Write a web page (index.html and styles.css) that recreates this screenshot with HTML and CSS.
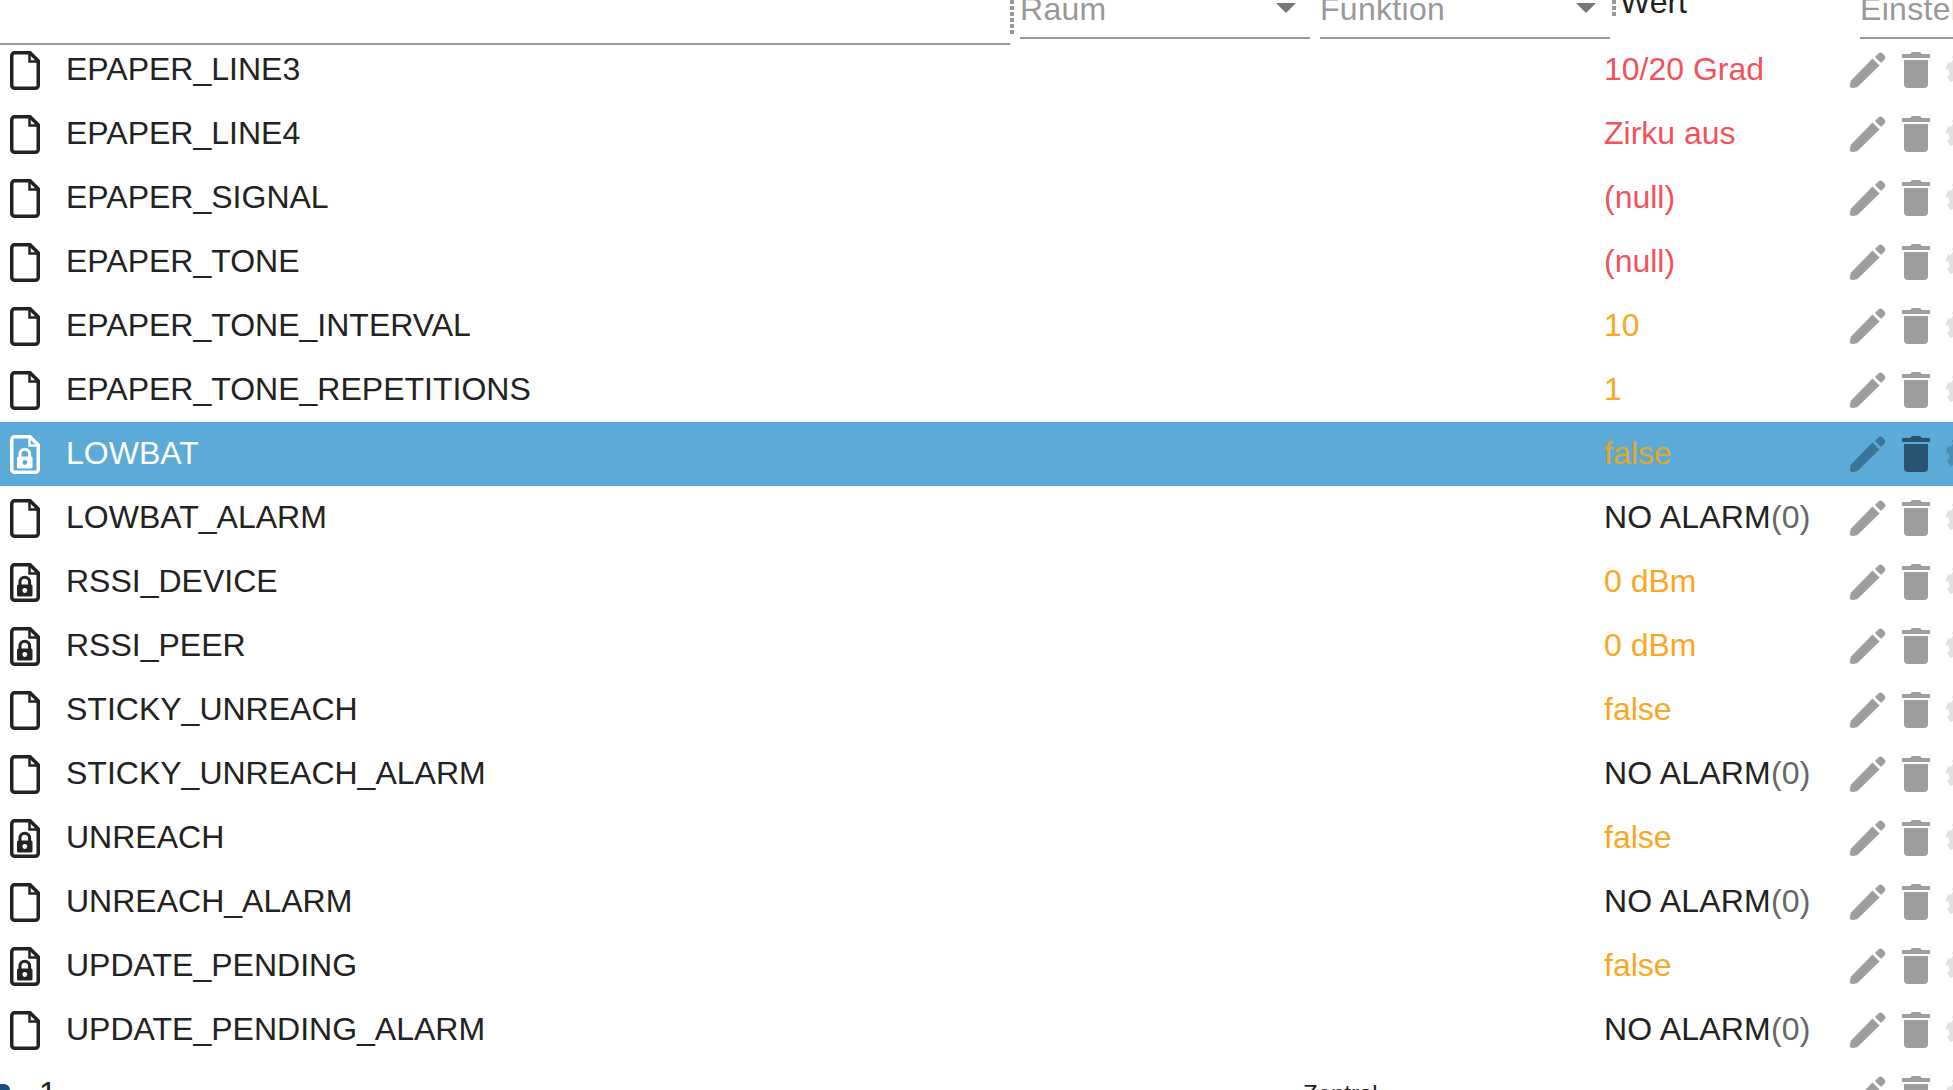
FILE: index.html
```html
<!DOCTYPE html>
<html lang="en">
<head>
    <meta charset="UTF-8">
    <title>Objekte</title>
    <link rel="stylesheet" href="styles.css">
</head>
<body>
    <svg class="defs" width="0" height="0">
        <symbol id="i-file" viewBox="0 0 30 39">
            <path class="file-line" d="M5 1.75H20L28.25 10V34a3 3 0 0 1-3 3.25H4.75a3 3 0 0 1-3-3.25V4.75a3 3 0 0 1 3.25-3z"/>
            <path class="file-fold" d="M19.5 2V10.5H28"/>
        </symbol>
        <symbol id="i-file-lock" viewBox="0 0 30 39">
            <path class="file-line" d="M5 1.75H20L28.25 10V34a3 3 0 0 1-3 3.25H4.75a3 3 0 0 1-3-3.25V4.75a3 3 0 0 1 3.25-3z"/>
            <path class="file-fold" d="M19.5 2V10.5H28"/>
            <path class="lock-bow" d="M10 23V19a4.8 4.8 0 0 1 9.6 0V23"/>
            <rect class="lock-body" x="7" y="21.5" width="15.5" height="12" rx="1.5"/>
            <circle class="lock-hole" cx="14.8" cy="27.5" r="2.4"/>
        </symbol>
        <symbol id="i-pencil" viewBox="0 0 36 36">
            <path d="M1 28.5L22.5 6.5 29.5 13.5 7.5 35Q4.5 36 2 36 0 36 0 34 0 31 1 28.5z"/>
            <path d="M25 5L28.5 1.5Q30.5 0 32 1L35 4Q36 5.5 34.5 7.5L31 11z"/>
        </symbol>
        <symbol id="i-trash" viewBox="0 0 28 36">
            <path d="M10 0h8l2 2h8v4H0V2h8z"/>
            <path d="M2 8h24v24a4 4 0 0 1-4 4H6a4 4 0 0 1-4-4z"/>
        </symbol>
        <symbol id="i-gear" viewBox="0 0 36 36">
            <circle cx="18" cy="18" r="15"/>
            <circle class="gear-teeth" cx="18" cy="18" r="16"/>
        </symbol>
    </svg>

    <div class="table">
        <div class="head">
            <div class="head-name"></div>
            <div class="handle"></div>
            <div class="head-cell">
                <span class="head-label">Raum</span>
                <span class="caret"></span>
            </div>
            <div class="head-cell">
                <span class="head-label">Funktion</span>
                <span class="caret"></span>
            </div>
            <div class="handle handle-short"></div>
            <div class="head-value">Wert</div>
            <div class="head-cell head-settings">
                <span class="head-label">Einstellungen</span>
            </div>
        </div>

        <div class="rows">
            <div class="row">
                <div class="row-icon"><svg class="file"><use href="#i-file"/></svg></div>
                <div class="row-name">EPAPER_LINE3</div>
                <div class="row-room"></div>
                <div class="row-value red">10/20 Grad</div>
                <div class="actions"><svg class="pencil"><use href="#i-pencil"/></svg><svg class="trash"><use href="#i-trash"/></svg><svg class="gear"><use href="#i-gear"/></svg></div>
            </div>
            <div class="row">
                <div class="row-icon"><svg class="file"><use href="#i-file"/></svg></div>
                <div class="row-name">EPAPER_LINE4</div>
                <div class="row-room"></div>
                <div class="row-value red">Zirku aus</div>
                <div class="actions"><svg class="pencil"><use href="#i-pencil"/></svg><svg class="trash"><use href="#i-trash"/></svg><svg class="gear"><use href="#i-gear"/></svg></div>
            </div>
            <div class="row">
                <div class="row-icon"><svg class="file"><use href="#i-file"/></svg></div>
                <div class="row-name">EPAPER_SIGNAL</div>
                <div class="row-room"></div>
                <div class="row-value red">(null)</div>
                <div class="actions"><svg class="pencil"><use href="#i-pencil"/></svg><svg class="trash"><use href="#i-trash"/></svg><svg class="gear"><use href="#i-gear"/></svg></div>
            </div>
            <div class="row">
                <div class="row-icon"><svg class="file"><use href="#i-file"/></svg></div>
                <div class="row-name">EPAPER_TONE</div>
                <div class="row-room"></div>
                <div class="row-value red">(null)</div>
                <div class="actions"><svg class="pencil"><use href="#i-pencil"/></svg><svg class="trash"><use href="#i-trash"/></svg><svg class="gear"><use href="#i-gear"/></svg></div>
            </div>
            <div class="row">
                <div class="row-icon"><svg class="file"><use href="#i-file"/></svg></div>
                <div class="row-name">EPAPER_TONE_INTERVAL</div>
                <div class="row-room"></div>
                <div class="row-value orange">10</div>
                <div class="actions"><svg class="pencil"><use href="#i-pencil"/></svg><svg class="trash"><use href="#i-trash"/></svg><svg class="gear"><use href="#i-gear"/></svg></div>
            </div>
            <div class="row">
                <div class="row-icon"><svg class="file"><use href="#i-file"/></svg></div>
                <div class="row-name">EPAPER_TONE_REPETITIONS</div>
                <div class="row-room"></div>
                <div class="row-value orange">1</div>
                <div class="actions"><svg class="pencil"><use href="#i-pencil"/></svg><svg class="trash"><use href="#i-trash"/></svg><svg class="gear"><use href="#i-gear"/></svg></div>
            </div>
            <div class="row selected">
                <div class="row-icon"><svg class="file"><use href="#i-file-lock"/></svg></div>
                <div class="row-name">LOWBAT</div>
                <div class="row-room"></div>
                <div class="row-value orange">false</div>
                <div class="actions"><svg class="pencil"><use href="#i-pencil"/></svg><svg class="trash"><use href="#i-trash"/></svg><svg class="gear"><use href="#i-gear"/></svg></div>
            </div>
            <div class="row">
                <div class="row-icon"><svg class="file"><use href="#i-file"/></svg></div>
                <div class="row-name">LOWBAT_ALARM</div>
                <div class="row-room"></div>
                <div class="row-value alarm">NO ALARM<span class="unit">(0)</span></div>
                <div class="actions"><svg class="pencil"><use href="#i-pencil"/></svg><svg class="trash"><use href="#i-trash"/></svg><svg class="gear"><use href="#i-gear"/></svg></div>
            </div>
            <div class="row">
                <div class="row-icon"><svg class="file"><use href="#i-file-lock"/></svg></div>
                <div class="row-name">RSSI_DEVICE</div>
                <div class="row-room"></div>
                <div class="row-value orange">0 dBm</div>
                <div class="actions"><svg class="pencil"><use href="#i-pencil"/></svg><svg class="trash"><use href="#i-trash"/></svg><svg class="gear"><use href="#i-gear"/></svg></div>
            </div>
            <div class="row">
                <div class="row-icon"><svg class="file"><use href="#i-file-lock"/></svg></div>
                <div class="row-name">RSSI_PEER</div>
                <div class="row-room"></div>
                <div class="row-value orange">0 dBm</div>
                <div class="actions"><svg class="pencil"><use href="#i-pencil"/></svg><svg class="trash"><use href="#i-trash"/></svg><svg class="gear"><use href="#i-gear"/></svg></div>
            </div>
            <div class="row">
                <div class="row-icon"><svg class="file"><use href="#i-file"/></svg></div>
                <div class="row-name">STICKY_UNREACH</div>
                <div class="row-room"></div>
                <div class="row-value orange">false</div>
                <div class="actions"><svg class="pencil"><use href="#i-pencil"/></svg><svg class="trash"><use href="#i-trash"/></svg><svg class="gear"><use href="#i-gear"/></svg></div>
            </div>
            <div class="row">
                <div class="row-icon"><svg class="file"><use href="#i-file"/></svg></div>
                <div class="row-name">STICKY_UNREACH_ALARM</div>
                <div class="row-room"></div>
                <div class="row-value alarm">NO ALARM<span class="unit">(0)</span></div>
                <div class="actions"><svg class="pencil"><use href="#i-pencil"/></svg><svg class="trash"><use href="#i-trash"/></svg><svg class="gear"><use href="#i-gear"/></svg></div>
            </div>
            <div class="row">
                <div class="row-icon"><svg class="file"><use href="#i-file-lock"/></svg></div>
                <div class="row-name">UNREACH</div>
                <div class="row-room"></div>
                <div class="row-value orange">false</div>
                <div class="actions"><svg class="pencil"><use href="#i-pencil"/></svg><svg class="trash"><use href="#i-trash"/></svg><svg class="gear"><use href="#i-gear"/></svg></div>
            </div>
            <div class="row">
                <div class="row-icon"><svg class="file"><use href="#i-file"/></svg></div>
                <div class="row-name">UNREACH_ALARM</div>
                <div class="row-room"></div>
                <div class="row-value alarm">NO ALARM<span class="unit">(0)</span></div>
                <div class="actions"><svg class="pencil"><use href="#i-pencil"/></svg><svg class="trash"><use href="#i-trash"/></svg><svg class="gear"><use href="#i-gear"/></svg></div>
            </div>
            <div class="row">
                <div class="row-icon"><svg class="file"><use href="#i-file-lock"/></svg></div>
                <div class="row-name">UPDATE_PENDING</div>
                <div class="row-room"></div>
                <div class="row-value orange">false</div>
                <div class="actions"><svg class="pencil"><use href="#i-pencil"/></svg><svg class="trash"><use href="#i-trash"/></svg><svg class="gear"><use href="#i-gear"/></svg></div>
            </div>
            <div class="row">
                <div class="row-icon"><svg class="file"><use href="#i-file"/></svg></div>
                <div class="row-name">UPDATE_PENDING_ALARM</div>
                <div class="row-room"></div>
                <div class="row-value alarm">NO ALARM<span class="unit">(0)</span></div>
                <div class="actions"><svg class="pencil"><use href="#i-pencil"/></svg><svg class="trash"><use href="#i-trash"/></svg><svg class="gear"><use href="#i-gear"/></svg></div>
            </div>
            <div class="row">
                <div class="row-icon"><div class="folder"></div></div>
                <div class="row-name row-name-indent">1</div>
                <div class="row-room">Zentral</div>
                <div class="row-value"></div>
                <div class="actions"><svg class="pencil"><use href="#i-pencil"/></svg><svg class="trash"><use href="#i-trash"/></svg><svg class="gear"><use href="#i-gear"/></svg></div>
            </div>
        </div>
    </div>
</body>
</html>
```

FILE: styles.css
```css
html, body {
    margin: 0;
    padding: 0;
    height: 1090px;
    overflow: hidden;
    background-color: #fff;
}
body {
    font-family: "Liberation Sans", Arial, sans-serif;
    font-size: 32px;
    color: #222;
}
.defs {
    display: block;
    height: 0;
}

/* header */
.head {
    display: flex;
    height: 45px;
    overflow: hidden;
}
.head-name {
    width: 1010px;
    height: 43px;
    flex: none;
    border-bottom: 2px solid #999;
}
.handle {
    width: 4px;
    height: 36px;
    flex: none;
    margin-right: 6px;
    background-image: linear-gradient(#999 60%, transparent 60%);
    background-size: 4px 6px;
}
.handle-short {
    height: 18px;
    margin-left: 2px;
    margin-right: 4px;
}
.head-cell {
    width: 290px;
    height: 37px;
    flex: none;
    margin-right: 10px;
    display: flex;
    justify-content: space-between;
    border-bottom: 2px solid #999;
    color: #999;
}
.head-cell + .handle-short {
    margin-left: -8px;
}
.head-label {
    line-height: 38px;
    margin-top: -10px;
    white-space: nowrap;
    letter-spacing: .3px;
}
.caret {
    width: 0;
    height: 0;
    margin: 3px 14px 0 0;
    border-left: 10px solid transparent;
    border-right: 10px solid transparent;
    border-top: 10px solid #777;
}
.head-value {
    width: 240px;
    flex: none;
    line-height: 38px;
    margin-top: -17px;
}
.head-settings {
    width: 93px;
    margin-right: 0;
    overflow: hidden;
}

/* rows */
.rows {
    margin-top: -7px;
}
.row {
    display: grid;
    grid-template-columns: 64px 1239px 301px 246px 103px;
    align-items: center;
    height: 64px;
    overflow: hidden;
}
.row-icon {
    height: 64px;
    display: flex;
    align-items: center;
    padding-left: 10px;
    box-sizing: border-box;
}
.file {
    width: 30px;
    height: 39px;
    color: #222;
    --hole: #fff;
}
.file-line, .file-fold {
    fill: none;
    stroke: currentColor;
    stroke-width: 3.5;
}
.file-fold {
    stroke-width: 2.5;
}
.lock-bow {
    fill: none;
    stroke: currentColor;
    stroke-width: 3;
}
.lock-body {
    fill: currentColor;
}
.lock-hole {
    fill: var(--hole);
}
.row-name {
    white-space: nowrap;
    padding: 0 0 2px 2px;
}
.row-name-indent {
    margin-left: -27px;
}
.row-room {
    font-size: 24px;
}
.row-value {
    white-space: nowrap;
    padding-bottom: 2px;
}
.red { color: #f4525a; }
.orange { color: #f9a825; }
.alarm { letter-spacing: .2px; }
.unit { color: #666; }

.actions {
    display: flex;
    align-items: center;
    gap: 16px;
    height: 64px;
    overflow: hidden;
    color: #9e9e9e;
}
.actions svg {
    flex: none;
    fill: currentColor;
}
.pencil {
    width: 36px;
    height: 36px;
}
.trash {
    width: 28px;
    height: 36px;
}
.gear {
    width: 36px;
    height: 36px;
    color: #e2e2e2;
}
.gear-teeth {
    fill: none;
    stroke: currentColor;
    stroke-width: 4;
    stroke-dasharray: 7 5.57;
}

/* selected row */
.selected {
    background-color: #5baad8;
    color: #fff;
}
.selected .file {
    color: #fff;
    --hole: #5baad8;
}
.selected .orange { color: #e5a823; }
.selected .pencil { color: #3a7599; }
.selected .trash { color: #295370; }
.selected .gear { color: #4a8db5; }

.folder {
    width: 10px;
    height: 20px;
    margin: 22px 0 0 -10px;
    background-color: #1a4f80;
    border-top-right-radius: 6px;
    align-self: flex-start;
}
```
